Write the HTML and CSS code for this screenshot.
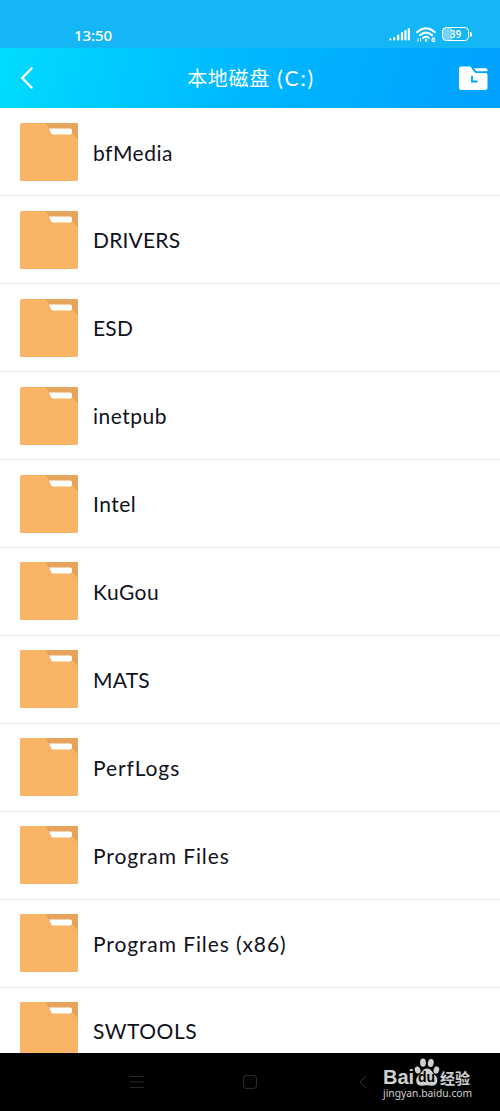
FILE: index.html
```html
<!DOCTYPE html>
<html lang="zh-CN">
<head>
    <meta charset="UTF-8">
    <meta name="viewport" content="width=device-width, initial-scale=1.0">
    <title>本地磁盘 (C:)</title>
    <link rel="stylesheet" href="styles.css">
</head>
<body>
    <svg class="sprite" width="0" height="0">
        <symbol id="folder" viewBox="0 0 58 58">
            <rect width="58" height="58" rx="1.5" fill="#f8b464"/>
            <path d="M26 0h30.5A1.5 1.5 0 0 1 58 1.5V16L52 10.5H31Z" fill="#e5a35b"/>
            <path d="M29 5.5h21q2 0 2 2v2q0 2-2 2H33q-1.5 0-2-1.5Z" fill="#fff"/>
        </symbol>
    </svg>

    <div class="status-bar">
        <span class="time">13:50</span>
        <div class="status-icons">
            <svg width="21" height="14" viewBox="0 0 21 14" stroke="#fff" stroke-width="2.2" stroke-linecap="round">
                <path d="M1.4 12.3v.2M5.3 11v1.5M9.2 8.5v4M13 6.2v6.3M16.4 4.2v8.3M19.8 2.2v10.3"/>
            </svg>
            <svg width="20" height="16" viewBox="0 0 20 16" fill="none" stroke="#fff" stroke-width="2" stroke-linecap="round">
                <path d="M1 5.2Q10-2.8 19 5.2M4 8.3Q10 3 16 8.3M7 11Q10 8.6 13 11"/>
                <path d="M10 13.2v.4" stroke-width="2.4"/>
                <path d="M2 12v2.3M4.6 11.5v2.3" stroke-width="1.1"/>
                <path d="M18.2 10.5q-2.2.5-2.2 2.7" stroke-width="1.1"/>
                <circle cx="17.4" cy="13.2" r="1.4" stroke-width="1.1"/>
            </svg>
            <div class="battery"><span>39</span></div>
        </div>
    </div>

    <div class="header">
        <svg width="14" height="24" viewBox="0 0 14 24" fill="none" stroke="#fff" stroke-width="2.5" stroke-linecap="round" stroke-linejoin="round">
            <path d="M11.5 2.5L2.2 12L11.5 21.5"/>
        </svg>
        <h1 class="title">本地磁盘<span> (C:)</span></h1>
        <svg width="30" height="24" viewBox="0 0 30 24">
            <path d="M1 2.5Q1 .5 3 .5H12.5L16 5.5Q16.8 7 18.5 7H27.5Q29.5 7 29.5 9V21.5Q29.5 24 27 24H3.5Q1 24 1 21.5Z" fill="#fff"/>
            <path d="M16 2.2H27.5Q29.5 2.2 29.5 4V5.3H19.2Q18 5.3 17.3 4.2Z" fill="#fff"/>
            <path d="M14 10.5V15.5H18.8" fill="none" stroke="#00a5ff" stroke-width="1.8" stroke-linecap="round"/>
        </svg>
    </div>

    <div class="file-list">
        <div class="file"><svg class="folder"><use href="#folder"/></svg><span>bfMedia</span></div>
        <div class="file caps"><svg class="folder"><use href="#folder"/></svg><span>DRIVERS</span></div>
        <div class="file caps"><svg class="folder"><use href="#folder"/></svg><span>ESD</span></div>
        <div class="file"><svg class="folder"><use href="#folder"/></svg><span>inetpub</span></div>
        <div class="file"><svg class="folder"><use href="#folder"/></svg><span>Intel</span></div>
        <div class="file"><svg class="folder"><use href="#folder"/></svg><span>KuGou</span></div>
        <div class="file caps"><svg class="folder"><use href="#folder"/></svg><span>MATS</span></div>
        <div class="file wide"><svg class="folder"><use href="#folder"/></svg><span>PerfLogs</span></div>
        <div class="file wide"><svg class="folder"><use href="#folder"/></svg><span>Program Files</span></div>
        <div class="file wide"><svg class="folder"><use href="#folder"/></svg><span>Program Files (x86)</span></div>
        <div class="file"><svg class="folder"><use href="#folder"/></svg><span>SWTOOLS</span></div>
    </div>

    <div class="nav-bar">
        <svg width="14" height="14" viewBox="0 0 14 14" stroke="#292929"><path d="M0 1.5h14M0 7h14M0 12.5h14"/></svg>
        <svg width="14" height="14" viewBox="0 0 14 14" fill="none" stroke="#303030"><rect x=".6" y=".6" width="12.8" height="12.8" rx="2.5"/></svg>
        <svg width="14" height="14" viewBox="0 0 14 14" fill="none" stroke="#303030"><path d="M10.5 .5L4 7L10.5 13.5"/></svg>
        <div class="watermark">
            <div class="brand">
                <span class="bai">Bai</span>
                <div class="paw">
                    <svg width="26" height="28" viewBox="0 0 26 28" fill="#d0d0d0">
                        <ellipse cx="3.6" cy="12" rx="2.8" ry="3.6" transform="rotate(-15 3.6 12)"/>
                        <ellipse cx="9" cy="4.7" rx="2.9" ry="4.1"/>
                        <ellipse cx="16.8" cy="5" rx="2.9" ry="4.1" transform="rotate(10 16.8 5)"/>
                        <ellipse cx="22.4" cy="12" rx="2.8" ry="3.7" transform="rotate(15 22.4 12)"/>
                        <path d="M13 10.5C17 10.5 18 14 20.5 16.5C23 19 24 21 23 24.5C22 28 18.5 28 16 27.5Q13 27 10 27.5C7 28 3.5 28 2.5 24.5C1.5 21 3 18.5 5.5 16.5C8 14.5 9 10.5 13 10.5Z"/>
                    </svg>
                    <span class="du">du</span>
                </div>
                <span class="jingyan">经验</span>
            </div>
            <div class="url">jingyan.baidu.com</div>
        </div>
    </div>
</body>
</html>
```
FILE: styles.css
```css
* {
    box-sizing: border-box;
}

body {
    display: flex;
    flex-direction: column;
    width: 500px;
    height: 1111px;
    margin: 0;
    overflow: hidden;
    background-color: #fff;
    font-family: 'Lato', 'Noto Sans CJK SC', sans-serif;
}

svg {
    display: block;
    flex-shrink: 0;
}

.sprite {
    display: none;
}

.status-bar {
    display: flex;
    justify-content: space-between;
    height: 48px;
    padding: 27px 28px 0 74px;
    background-color: #15b6f6;
    color: #fff;
}

.time {
    font-family: 'Noto Sans', sans-serif;
    font-size: 15px;
    line-height: 16px;
    font-weight: 500;
    letter-spacing: -0.1px;
}

.status-icons {
    display: flex;
    align-items: flex-start;
    gap: 6px;
}

.battery {
    display: flex;
    align-items: center;
    width: 30px;
    height: 14px;
}

.battery span {
    width: 28px;
    height: 14px;
    border: 1.5px solid #fff;
    border-radius: 4px;
    background: linear-gradient(90deg, #73d3fa 36%, transparent 36%);
    font-family: 'Noto Sans', sans-serif;
    font-size: 10px;
    font-weight: 600;
    line-height: 12px;
    text-align: center;
}

.battery::after {
    content: '';
    width: 2px;
    height: 5px;
    margin-left: 1px;
    border-radius: 0 2px 2px 0;
    background-color: #fff;
}

.header {
    display: flex;
    align-items: center;
    justify-content: space-between;
    height: 60px;
    flex-shrink: 0;
    padding: 0 12px 0 20px;
    background: linear-gradient(105deg, #00dcff 0%, #00b8ff 48%, #00a0ff 100%);
}

.title {
    margin: 0 0 0 10px;
    color: #fff;
    font-size: 20px;
    font-weight: 400;
    line-height: 30px;
    letter-spacing: 0.7px;
    white-space: pre;
}

.title span {
    font-size: 21px;
    letter-spacing: 1.8px;
}

.file-list {
    flex: 1;
    min-height: 0;
    padding-top: 0.6px;
    overflow: hidden;
}

.file {
    display: flex;
    align-items: center;
    gap: 15px;
    height: 87.9px;
    padding-left: 20px;
    border-bottom: 1px solid #ebebeb;
    color: #10121c;
    font-size: 21px;
    letter-spacing: 0.5px;
}

.file.caps {
    letter-spacing: 0.2px;
}

.file.wide {
    letter-spacing: 0.9px;
}

.folder {
    width: 58px;
    height: 58px;
}

.nav-bar {
    display: flex;
    align-items: center;
    height: 58px;
    flex-shrink: 0;
    padding-left: 130px;
    gap: 99px;
    background-color: #000;
}

.watermark {
    width: 94px;
    margin: -7px 0 0 -86px;
    color: #d0d0d0;
}

.brand {
    display: flex;
    align-items: flex-end;
    height: 29px;
}

.bai {
    width: 31px;
    font-family: 'Liberation Sans', sans-serif;
    font-size: 20px;
    font-weight: 700;
    line-height: 17px;
}

.paw {
    position: relative;
    width: 26px;
    height: 28px;
}

.du {
    position: absolute;
    left: 4px;
    top: 13px;
    color: #000;
    font-family: 'Liberation Sans', sans-serif;
    font-size: 14px;
    font-weight: 700;
    line-height: 13px;
}

.jingyan {
    font-family: 'Noto Sans CJK SC', sans-serif;
    font-size: 15px;
    font-weight: 700;
    line-height: 17px;
}

.url {
    font-family: 'Noto Sans', sans-serif;
    font-size: 10.3px;
    line-height: 14px;
}
```
